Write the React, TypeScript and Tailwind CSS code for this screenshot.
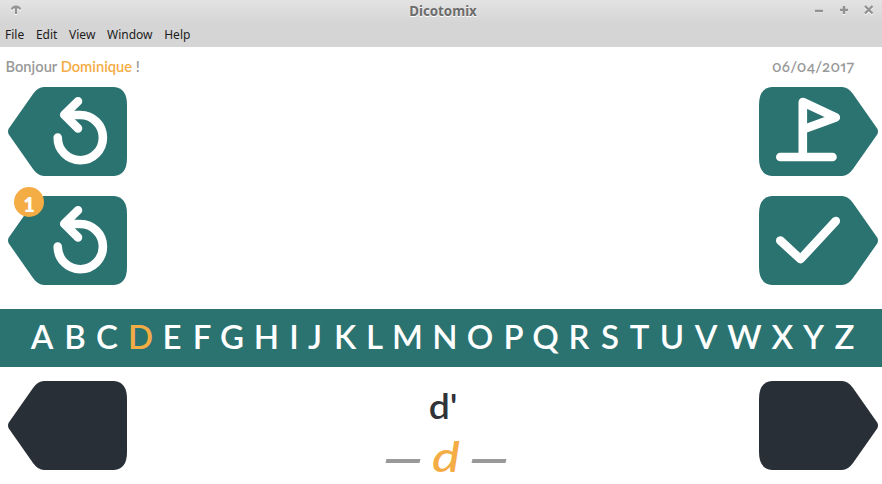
import type { ReactNode } from 'react';

// [letter, box width, space before it]
const letters: [string, number, number][] = [
  ['A', 22, 0], ['B', 20, 12], ['C', 22, 11], ['D', 21, 12], ['E', 18, 12], ['F', 17, 12.5],
  ['G', 22, 10.5], ['H', 21, 13], ['I', 4, 15], ['J', 14, 12], ['K', 20, 13], ['L', 17, 11],
  ['M', 25, 12], ['N', 22, 14], ['O', 24, 12], ['P', 18, 12.5], ['Q', 24, 11], ['R', 19, 12],
  ['S', 19, 12], ['T', 20, 10], ['U', 21, 12], ['V', 23, 12], ['W', 36, 9], ['X', 22, 9],
  ['Y', 22, 9], ['Z', 20, 10],
];

function Tag({ dark, flip, children }: { dark?: boolean; flip?: boolean; children?: ReactNode }) {
  return (
    <svg width="119" height="89" viewBox="0 0 119 89" className="block shrink-0" fill="none">
      <g transform={flip ? 'translate(119 0) scale(-1 1)' : undefined}>
        <path
          d="M.8 47.5 Q-.8 44.5 .8 41.5 L25 7 Q30 0 36 0 H106 Q119 1 119 18 V71 Q119 88 106 89 H36 Q30 89 25 82 Z"
          fill={dark ? '#292f37' : '#2a7371'}
        />
      </g>
      <g stroke="#fff" strokeWidth="8.6" strokeLinecap="round" strokeLinejoin="round">
        {children}
      </g>
    </svg>
  );
}

const Undo = () => (
  <>
    <path d="M49.7 50.5A22.6 22.6 0 1 0 72.300 28H58" />
    <path d="M70 14.200L56.200 27.800L70 41.400" />
  </>
);

export default function App() {
  return (
    <div className="flex h-[484px] w-[882px] flex-col overflow-hidden bg-white font-['Lato','Noto_Sans',sans-serif]">
      <header className="h-[47px] shrink-0 bg-linear-to-b from-[#e3e3e3] to-[#d5d5d5] to-50% font-['Noto_Sans',sans-serif]">
        <div className="grid h-[23px] grid-cols-[1fr_auto_1fr] items-center text-[#929292]">
          <svg width="12" height="10" viewBox="0 0 12 10" className="mb-1 ml-[10px]" fill="none">
            <path d="M1.500 4.300L3 2.500Q6 .5 9 2.500L10.500 4.300M6 2V9" stroke="#fff" strokeWidth="2" transform="translate(0 1)" />
            <path d="M1.500 4.300L3 2.500Q6 .5 9 2.500L10.500 4.300M3 2.500H9M6 2V9" stroke="currentColor" strokeWidth="2" />
          </svg>
          <h1 className="mr-[-4px] text-[13.300px] leading-[21px] font-bold text-[#6c6c6c] [text-shadow:0_1px_0_#fff]">Dicotomix</h1>
          <svg width="62" height="12" viewBox="0 0 62 12" className="mr-[7px] mb-[3px] justify-self-end" fill="none">
            <path d="M2 8H10M27 7H35M31 3V11M52 3L59.500 10.500M59.500 3L52 10.500" stroke="#fff" strokeWidth="2.200" />
            <path d="M2 7H10M27 6H35M31 2V10M52 2L59.500 9.500M59.500 2L52 9.500" stroke="currentColor" strokeWidth="2.400" />
          </svg>
        </div>
        <nav className="flex h-[24px] gap-[11.700px] pl-[5px] text-[12px] leading-[23px] text-[#1c1c1c]">
          <span>File</span><span>Edit</span><span>View</span><span>Window</span><span>Help</span>
        </nav>
      </header>

      <div className="flex h-[40px] shrink-0 justify-between pr-[28px] pl-[5.500px] text-[14.700px] leading-[39px] font-semibold text-[#999]">
        <p>Bonjour <span className="text-[#f4ac45]">Dominique</span> !</p>
        <time className="text-[15px] tracking-[0.250px] [font-feature-settings:'onum','pnum']">06/04/2017</time>
      </div>

      <main className="flex h-[222px] shrink-0 justify-between pr-1 pl-2">
        <div className="flex flex-col gap-[20px]">
          <Tag><Undo /></Tag>
          <div className="relative">
            <Tag><Undo /></Tag>
            <span className="absolute top-[-9px] left-[6px] size-[30px] rounded-full bg-[#f4ac45] text-center text-[20px] leading-[34px] font-extrabold text-white">1</span>
          </div>
        </div>
        <div className="flex flex-col gap-[20px]">
          <Tag flip>
            <path d="M21.300 70H73.500M43.800 70V15L76.800 30.500L43.800 42.500" />
          </Tag>
          <Tag flip>
            <path d="M21.300 44.500L41.500 63.200L76.800 25" />
          </Tag>
        </div>
      </main>

      <div className="flex h-[58px] shrink-0 bg-[#2a7371] pl-[31px] text-[33px] leading-[55px] font-semibold text-white">
        {letters.map(([letter, width, gap]) => (
          <span
            key={letter}
            className={`flex shrink-0 justify-center ${letter === 'D' ? 'text-[#f4ac45]' : ''}`}
            style={{ width, marginLeft: gap }}
          >
            {letter}
          </span>
        ))}
      </div>

      <footer className="flex grow justify-between pt-[14px] pr-1 pl-2">
        <Tag dark />
        <div className="flex flex-col items-center">
          <p className="h-[51px] scale-x-110 text-[34px] leading-[49px] font-semibold text-[#303338]">d'</p>
          <div className="ml-[6px] flex h-[50px] items-center gap-[12px] pt-[7px] leading-[50px]">
            <span className="h-[4px] w-[34px] -skew-x-12 bg-[#999]" />
            <span className="mt-[-9px] w-[28px] scale-x-122 text-center text-[43px] font-medium text-[#f4ac45] italic">d</span>
            <span className="h-[4px] w-[34px] -skew-x-12 bg-[#999]" />
          </div>
        </div>
        <Tag dark flip />
      </footer>
    </div>
  );
}
